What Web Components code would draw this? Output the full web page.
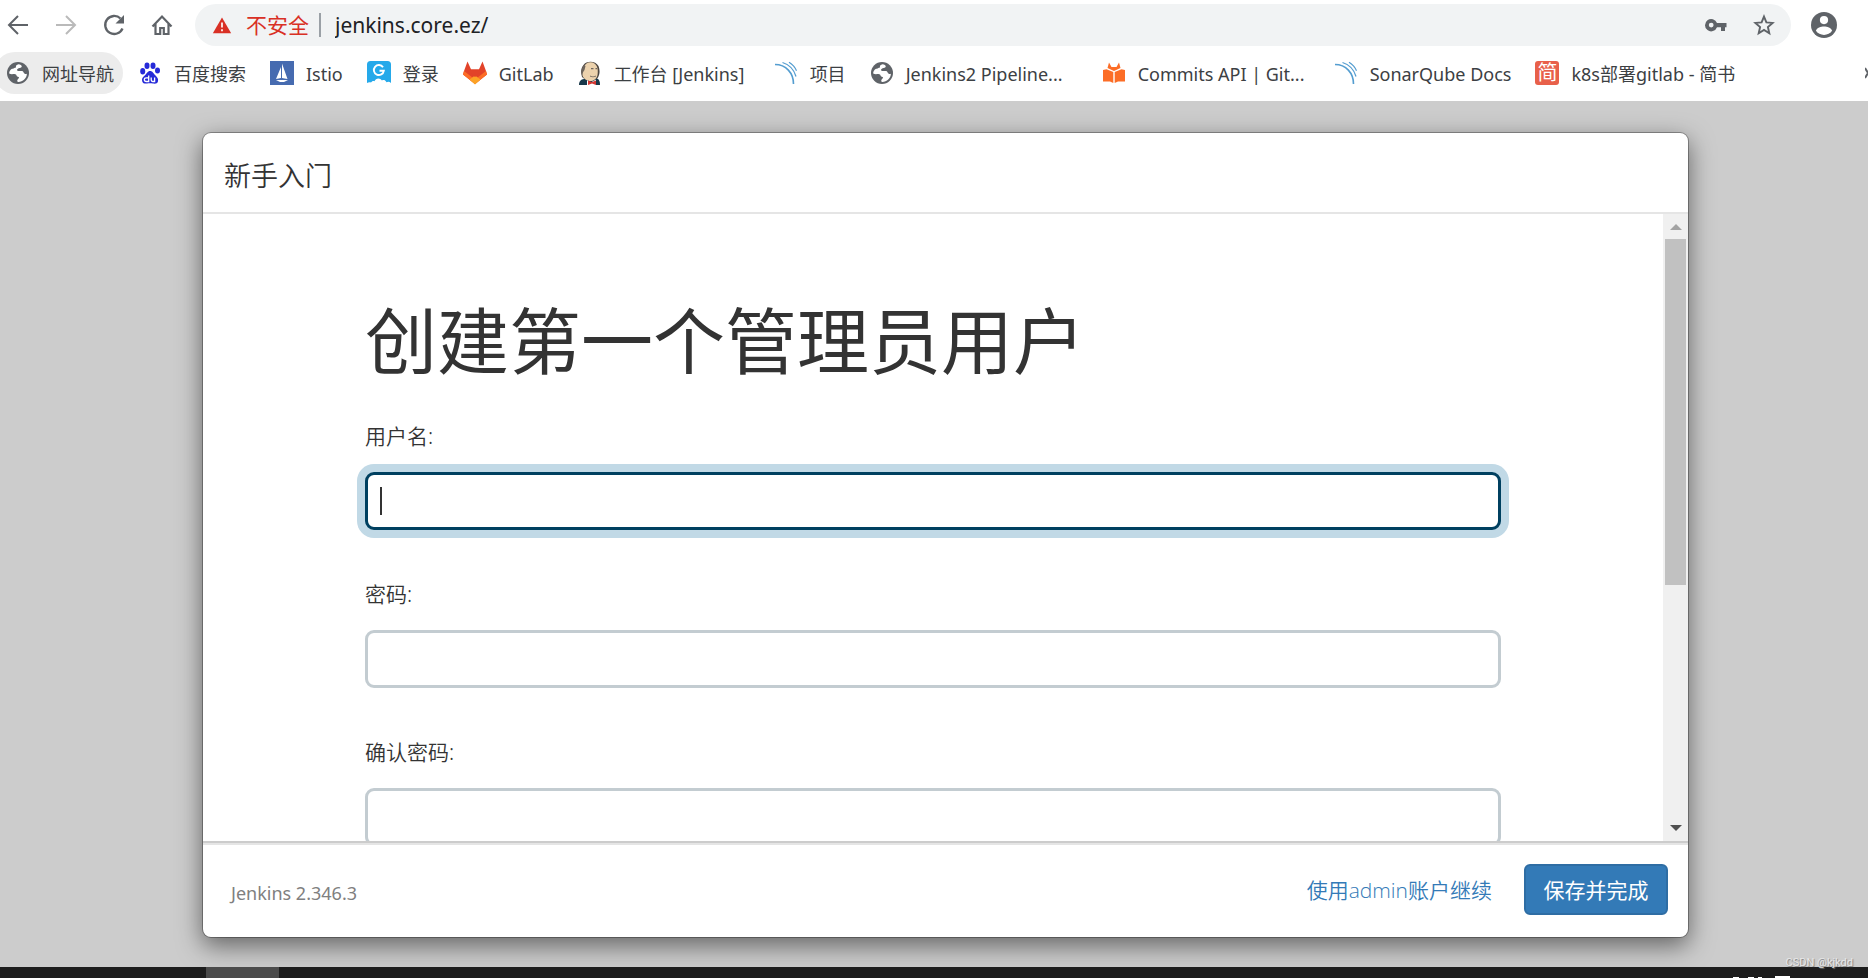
<!DOCTYPE html>
<html lang="zh-CN">
<head>
<meta charset="utf-8">
<title>新手入门 [Jenkins]</title>
<style>
html,body{margin:0;height:100%}
body{background:#ccc;font-family:"Noto Sans","Noto Sans CJK SC",sans-serif;color:#333}
</style>
</head>
<body>
<app-window></app-window>
<script>
const globe = `<svg viewBox="0 0 24 24"><circle cx="12" cy="12" r="11" fill="#5f6368"/><path d="M12.600 3.200c-2 .3-3 1.600-2.600 3.200-1.600.4-2.800 1.400-4 1.300C4.500 8.500 3 10.500 3.200 12.600c1.600.9 3.300.6 5.200.5 1.400 0 2 .7 2.300 1.800.6.9 1.900.5 2.300 1.400.3 1.300-1.500 1.800-1.700 3-.2.800.2 1.400.7 1.600 4.700.2 8.700-3.600 8.900-8.200-.7.4-1.500.5-2.200.1-1.300-.8-1-2.400-2.500-2.700-1.800-.4-3.900.5-5-.6-.6-1 .4-1.900 1.400-2.300 1.300-.5 3-.5 3.200-1.800.1-1-1.600-2-3.200-2.200z" fill="#fff"/></svg>`;
const sonar = `<svg viewBox="0 0 24 24" fill="none" stroke="#549dd0"><path d="M1 3.500C12 3.500 19.500 12 19.500 23" stroke-width="1.600"/><path d="M8.500 1.500C15 3.500 20 8.500 22 15.500" stroke-width="1.300"/><path d="M15 1.200c3.300 2 6 5 7.500 8.500" stroke-width="1.200"/></svg>`;
const icons = {
back:`<svg viewBox="0 0 24 24" fill="none" stroke="#5f6368" stroke-width="2"><path d="M22 12H3.500M12 3 3 12l9 9"/></svg>`,
forward:`<svg viewBox="0 0 24 24" fill="none" stroke="#bababa" stroke-width="2"><path d="M2 12h18.500M12 3l9 9-9 9"/></svg>`,
reload:`<svg viewBox="0 0 24 24"><path d="M20.500 15.500A9 9 0 1 1 18.500 5.500" fill="none" stroke="#5f6368" stroke-width="2.300"/><path d="M22 2v8.500h-8.500z" fill="#5f6368"/></svg>`,
home:`<svg viewBox="0 0 24 24" fill="none" stroke="#5f6368" stroke-width="2.200"><path d="M2.500 13.500 12 3.500l9.500 10M5.500 11v10h4.700v-6h3.600v6h4.700V11"/></svg>`,
warn:`<svg viewBox="0 0 24 24"><path d="M12 3 23 22H1z" fill="#d93025"/><path d="M11 9h2v6h-2zM11 17h2v2.400h-2z" fill="#fff"/></svg>`,
key:`<svg viewBox="0 0 24 24"><path fill="#5f6368" fill-rule="evenodd" d="M13 10a6.200 6.200 0 1 0 0 4.300h4V18h4v-3.700h1.500V10zM7.200 14.500a2.400 2.400 0 1 1 0-4.800 2.400 2.400 0 0 1 0 4.800z"/></svg>`,
star:`<svg viewBox="0 0 24 24"><path fill="none" stroke="#5f6368" stroke-width="1.900" d="m12 3.600 2.400 5.800 6.200.5-4.700 4.100 1.400 6.200-5.300-3.300-5.300 3.300L8.100 14 3.400 9.900l6.200-.5z"/></svg>`,
user:`<svg viewBox="0 0 24 24"><circle cx="12" cy="12" r="12" fill="#5f6368"/><circle cx="12" cy="7.400" r="3.800" fill="#fff"/><path d="M4.500 17.200c1-2.500 4.500-3.800 7.500-3.800s6.500 1.300 7.500 3.800a9 9 0 0 1-15 0z" fill="#fff"/></svg>`,
more:`<svg viewBox="0 0 3 12"><path d="m0 1 3 5-3 5" fill="none" stroke="#5f6368" stroke-width="2"/></svg>`,
globe, sonar,
baidu:`<svg viewBox="0 0 24 24"><g fill="#2529d8"><ellipse cx="4.700" cy="10.200" rx="2.500" ry="3.200"/><ellipse cx="9" cy="4.700" rx="2.500" ry="3.300"/><ellipse cx="15" cy="4.700" rx="2.500" ry="3.300"/><ellipse cx="19.500" cy="9.500" rx="2.500" ry="3"/><path d="M12 10c-2.500 0-3 2.500-5 4.200-2.500 2-3.500 3.500-2.800 6 .8 2.500 2.800 2.600 4.800 2.300 2-.3 4-.3 6 0s4.500.3 5-2.300c.6-2.500-.8-4-2.700-6C15.200 12.400 14.800 10 12 10z"/></g><path d="M10.700 14.500v6H8.200c-2.500 0-2.500-3.600 0-3.600h2.500M13.200 16.500v2.600c0 1.300.6 1.400 1.400 1.400h2v-4" fill="none" stroke="#fff" stroke-width="1.300"/></svg>`,
istio:`<svg viewBox="0 0 24 24"><path fill="#466bb0" d="M0 0h24v24H0z"/><path fill="#fff" d="M11 6v11l-5 1zM12 2.500 17.500 18 12 17zM6 19h12l-4 2h-4z"/></svg>`,
login:`<svg viewBox="0 0 24 24"><path fill="#25a9ea" d="M3.500 0h17A3.500 3.500 0 0 1 24 3.500V22c-1.500-1.500-3-1.700-4.500-.8-1.300-2.200-3-2.500-4.500-1.700-2-3.300-6.500-2.500-7.500.7-1.700-.6-2.700.3-3.500 1.300-1.500-.5-3 0-4 .5V3.500A3.500 3.500 0 0 1 3.500 0z"/><path d="M16 6.200a5 5 0 1 0 .8 3.600h-4.300" fill="none" stroke="#fff" stroke-width="1.900"/></svg>`,
gitlab:`<svg viewBox="0 0 24 24"><path fill="#e24329" d="M4.500.500 8 8.300h8L19.500.500 23 10l1 3.500L12 23 0 13.500 1 10z"/><path fill="#fc6d26" d="m1 10-1 3.500L12 23l12-9.500-1-3.500-11 8.500z"/><path fill="#fca326" d="m6.500 18.600 5.500-4 5.500 4L12 23.500z"/><path fill="#e24329" d="M4 9.500h16l-8 6.500z"/></svg>`,
jenkins:`<svg viewBox="0 0 24 24"><path fill="#17384a" d="M1 24c0-4 2-5.500 5-6l12-1c3 1 4 3 4 7z"/><path fill="#4b4540" d="M4 16C2.500 11 3 7 5.500 4c3-4.500 12-4.500 15 1 1.500 4 1.500 8-.5 11.500-2 3-11 5-16-.5z"/><path fill="#ecd2ad" d="M4.500 14.500C4 9 6 1.300 12.500 1.300S20.500 8 19.500 14c-1 4-4 6-7 6s-6.500-1.500-8-5.500z"/><path fill="#6d645c" d="M3.800 13.500C3 10 3.500 7 6 4l1.500 1-1 4-1 1.500zM13 7h2.500v1.300H13zM17.500 7H19v1.300h-1.500zM12 14.500c2 1.200 4 1.200 6 0v1c-2 1-4 1-6 0z"/><path fill="#fff" d="m9 19 3 3 6-3.500V24H9z"/><path fill="#d33833" d="m10 19.500 4 1.500 4-1.500V24l-4-1.500-4 1.500z"/></svg>`,
docs:`<svg viewBox="0 0 24 24"><path fill="#fc6d26" d="M7 1.500 9.500 6h5L17 1.500 18.500 7 12 10 5.500 7zM1 9l3.500-.7L11.300 11v11L8 20.500H1zM23 9l-3.500-.7L12.700 11v11l3.300-1.500h7z"/></svg>`
};
const define = (name, css, html, setup) => customElements.define(name, class extends HTMLElement {
  constructor(){
    super();
    this.attachShadow({mode:'open'}).innerHTML = `<style>*{box-sizing:border-box}${css}</style>${html}`;
  }
  connectedCallback(){ if (setup) setup(this, this.shadowRoot); }
});

define('ui-icon', `:host{display:block;flex:none;width:24px;height:24px}span{display:block;height:100%}svg{display:block;width:100%;height:100%}`, `<span></span>`,
  (el, root) => { root.querySelector('span').innerHTML = icons[el.getAttribute('name')]; });

define('tool-button', `:host{display:block;flex:none}button{display:block;padding:0;border:0;background:none}`,
  `<button type="button"><slot></slot></button>`,
  (el, root) => root.querySelector('button').setAttribute('aria-label', el.getAttribute('label')));

define('address-bar', `
:host{display:flex;align-items:center;height:50px;padding:0 31px 0 6px;gap:24px;background:#fff}
.box{flex:1;display:flex;align-items:center;height:42px;margin:0 -4px 0 -3px;padding:0 15px 0 17px;gap:24px;border-radius:21px;background:#f1f3f4;min-width:0}
.site{display:flex;align-items:center;gap:14px;flex:none;font-size:21px;color:#d93025}
.site ui-icon{width:20px;height:20px}
.site span{padding-right:10px;border-right:2px solid #9aa0a6;line-height:24px}
input{flex:1;min-width:0;margin-left:-10px;padding:0;border:0;outline:0;background:none;font:21px/30px "Noto Sans","Noto Sans CJK SC",sans-serif;color:#202124}
.user{width:26px;height:26px}
`, `
<tool-button label="后退"><ui-icon name="back"></ui-icon></tool-button>
<tool-button label="前进"><ui-icon name="forward"></ui-icon></tool-button>
<tool-button label="重新加载"><ui-icon name="reload"></ui-icon></tool-button>
<tool-button label="主页"><ui-icon name="home"></ui-icon></tool-button>
<div class="box">
<div class="site"><ui-icon name="warn"></ui-icon><span>不安全</span></div>
<input type="text" aria-label="地址" value="jenkins.core.ez/">
<tool-button label="密码"><ui-icon name="key"></ui-icon></tool-button>
<tool-button label="收藏"><ui-icon name="star"></ui-icon></tool-button>
</div>
<tool-button label="用户"><ui-icon class="user" name="user"></ui-icon></tool-button>`);

define('book-mark', `
:host{display:block;flex:none;margin-right:3px}
a{display:flex;align-items:center;height:42px;gap:12px;padding:0 9px 0 12px;border-radius:21px;color:#3c4043;text-decoration:none;font-size:18px;line-height:24px;white-space:nowrap}
:host([active]) a{background:#ececec}
:host([medium]) .t{width:136px}
:host([long]) .t{width:172px}
.t{padding-top:2px}
`, `<a href="#"><slot name="icon"></slot><span class="t"><slot></slot></span></a>`);

define('bookmark-bar', `
:host{display:flex;align-items:flex-start;height:51px;padding-top:2px;background:#fff;overflow:hidden}
nav{display:flex;flex:1;min-width:0;margin-left:-6px}
.jian{width:24px;height:24px;border-radius:3px;background:#e8604a;color:#fff;text-align:center;font-size:20px;line-height:24px}
.more{width:3px;height:42px}
`, `
<nav aria-label="书签">
<book-mark active><ui-icon slot="icon" name="globe"></ui-icon>网址导航</book-mark>
<book-mark><ui-icon slot="icon" name="baidu"></ui-icon>百度搜索</book-mark>
<book-mark><ui-icon slot="icon" name="istio"></ui-icon>Istio</book-mark>
<book-mark><ui-icon slot="icon" name="login"></ui-icon>登录</book-mark>
<book-mark><ui-icon slot="icon" name="gitlab"></ui-icon>GitLab</book-mark>
<book-mark medium><ui-icon slot="icon" name="jenkins"></ui-icon>工作台 [Jenkins]</book-mark>
<book-mark><ui-icon slot="icon" name="sonar"></ui-icon>项目</book-mark>
<book-mark long><ui-icon slot="icon" name="globe"></ui-icon>Jenkins2 Pipeline...</book-mark>
<book-mark long><ui-icon slot="icon" name="docs"></ui-icon>Commits API | Git...</book-mark>
<book-mark><ui-icon slot="icon" name="sonar"></ui-icon>SonarQube Docs</book-mark>
<book-mark><span slot="icon" class="jian">简</span>k8s部署gitlab - 简书</book-mark>
</nav>
<tool-button label="更多书签"><ui-icon class="more" name="more"></ui-icon></tool-button>`);

define('form-field', `
:host{display:block;margin-bottom:51px}
label{display:block;margin-bottom:23px;font-size:21px;line-height:26px;font-weight:350}
.w{position:relative}
input{display:block;width:100%;height:58px;padding:0 12px;border:3px solid #c3ccd1;border-radius:9px;background:#fff;outline:0;font-size:21px}
:host([active]) input{border-color:#004060;box-shadow:0 0 0 8px #c1d9e6}
:host([active]) .w::after{content:"";position:absolute;left:15px;top:15px;width:2px;height:28px;background:#333}
`, `<label for="f"><slot></slot></label><div class="w"><input id="f"></div>`,
  (el, root) => root.querySelector('input').type = el.getAttribute('type') || 'text');

define('scroll-track', `
:host{display:flex;flex-direction:column;align-items:center;flex:none;width:25px;padding:10px 0;background:#f0f0f0}
i{width:0;height:0;border:6px solid transparent}
.up{border-top:0;border-bottom-color:#a3a3a3}
.down{border-bottom:0;border-top-color:#505050;margin-top:auto}
.thumb{width:21px;height:346px;margin-top:9px;background:#c1c1c1}
`, `<i class="up"></i><div class="thumb"></div><i class="down"></i>`);

define('setup-dialog', `
:host{display:flex;flex-direction:column;border:1px solid rgba(0,0,0,.3);border-radius:9px;background:#fff;background-clip:padding-box;box-shadow:0 8px 24px rgba(0,0,0,.5);overflow:hidden}
header{flex:none;height:81px;padding:24px 21px 0;border-bottom:2px solid #e5e5e5}
h4{margin:0;font-size:27px;line-height:38px;font-weight:350}
.body{flex:1;min-height:0;display:flex;border-bottom:2px solid #ccc}
form{flex:1;min-width:0;overflow:hidden;padding:80px 162px 0}
h1{margin:0 0 37px;font-size:72px;line-height:92px;font-weight:400}
footer{flex:none;display:flex;align-items:center;height:94px;padding:0 20px 0 28px;border-top:2px solid #e5e5e5}
.ver{flex:1;font-size:18px;color:#808080;padding-top:4px}
a{margin-right:32px;font-size:21px;color:#337ab7;text-decoration:none;font-family:"Open Sans","Noto Sans CJK SC",sans-serif;font-weight:350}
button{width:144px;height:51px;border:2px solid #2e6da4;border-radius:6px;background:#337ab7;color:#fff;padding:0;font:21px "Open Sans","Noto Sans CJK SC",sans-serif}
.end{display:flex;align-items:center;padding-bottom:4px}
`, `
<header><h4>新手入门</h4></header>
<div class="body">
<form>
<h1>创建第一个管理员用户</h1>
<form-field active>用户名:</form-field>
<form-field type="password">密码:</form-field>
<form-field type="password">确认密码:</form-field>
</form>
<scroll-track></scroll-track>
</div>
<footer><span class="ver">Jenkins 2.346.3</span><div class="end"><a href="#">使用admin账户继续</a><button type="button">保存并完成</button></div></footer>`);

define('task-bar', `
:host{display:flex;justify-content:space-between;align-items:flex-end;flex:none;position:relative;height:11px;padding:0 78px 0 206px;background:#1d1d1d}
.app{width:73px;height:11px;background:#4b4b4b}
.clock{display:block;width:57px;height:2px}
.mark{position:absolute;right:15px;bottom:7px;font:11px/16px Roboto,sans-serif;color:#e8e8e8;text-shadow:1px 1px 1px #777}
`, `<i class="app"></i><svg class="clock" viewBox="0 0 57 2" fill="#fff"><path d="M0 1h6v1H0zM15 1h6v1h-6zM25 1h4v1h-4zM42 0h15v2H42z"/></svg><span class="mark">CSDN @kjkdd</span>`);

define('app-window', `
:host{display:flex;flex-direction:column;height:100vh;overflow:hidden}
main{flex:1;min-height:0;display:flex;padding:31px 179px 29px 202px;background:#ccc}
setup-dialog{flex:1;min-width:0}
address-bar,bookmark-bar{flex:none}
`, `<address-bar></address-bar><bookmark-bar></bookmark-bar><main><setup-dialog></setup-dialog></main><task-bar></task-bar>`);
</script>
</body>
</html>
